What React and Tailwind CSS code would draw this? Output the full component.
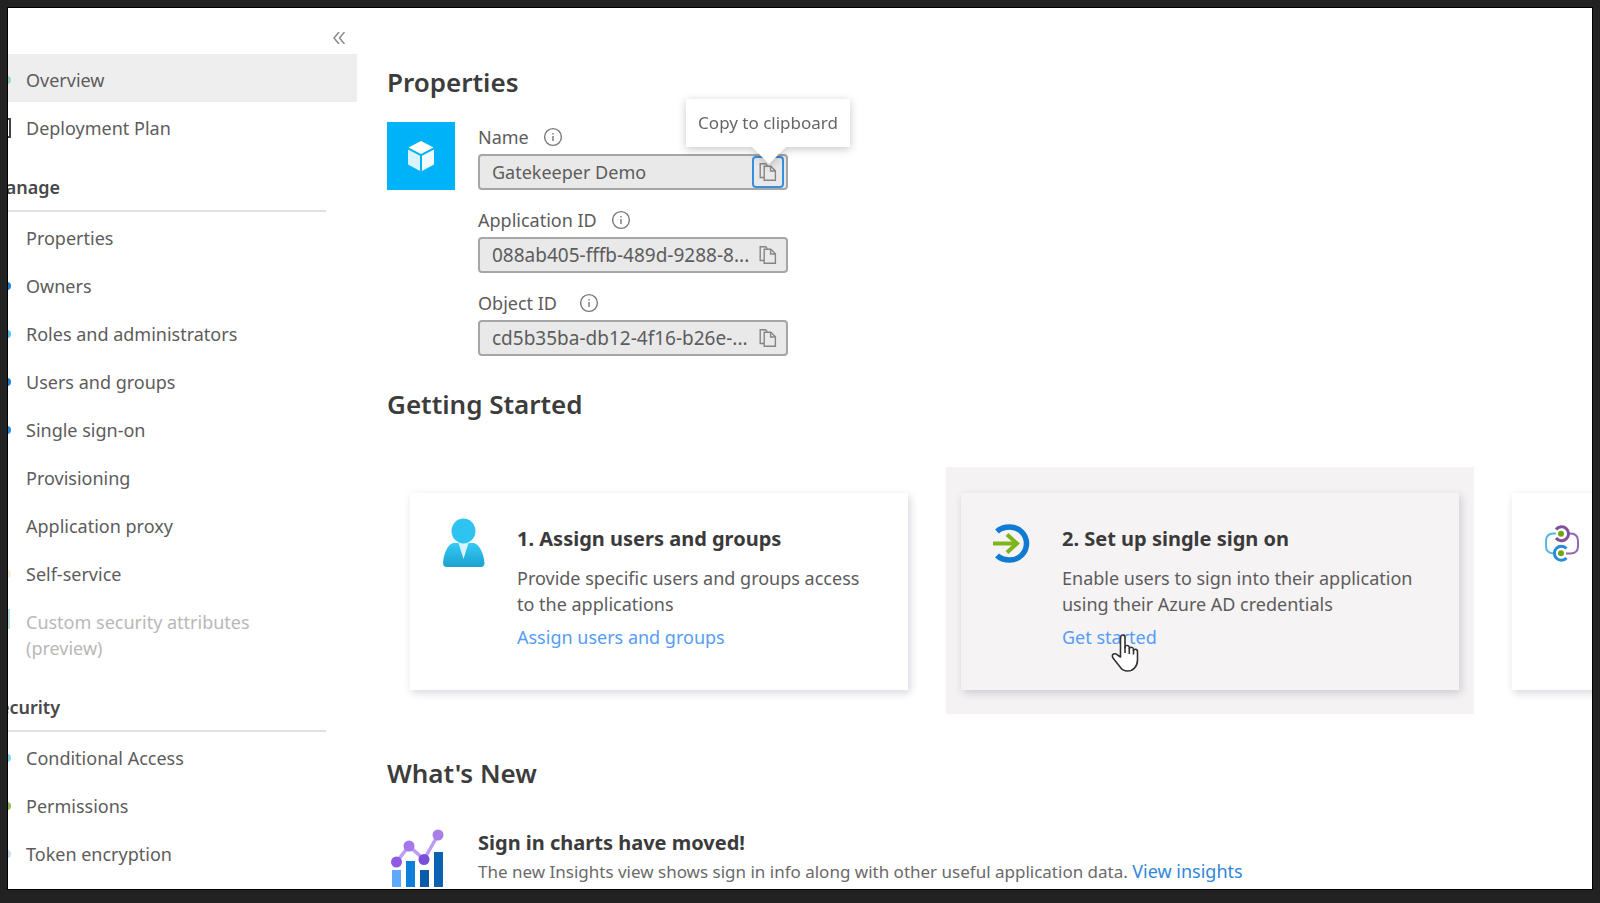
import React from 'react';

const manageItems = [
  { label: 'Properties' },
  { label: 'Owners', tint: 'bg-[#1b7fd0]' },
  { label: 'Roles and administrators', tint: 'bg-[#4fc3ea]' },
  { label: 'Users and groups', tint: 'bg-[#1b7fd0]' },
  { label: 'Single sign-on', tint: 'bg-[#2b8be0]' },
  { label: 'Provisioning' },
  { label: 'Application proxy' },
  { label: 'Self-service', tint: 'bg-[#fbeecb]' },
];

const securityItems = [
  { label: 'Conditional Access', tint: 'bg-[#7fd6ee]' },
  { label: 'Permissions', tint: 'bg-[#8cc152]' },
  { label: 'Token encryption', tint: 'bg-[#c9dcea]' },
];

const NavItem = ({ label, tint, active, outlined }) => (
  <a href="#" className={`flex h-12 items-center gap-[15px] pt-1 text-lg text-[#5c5c5c] ${active ? 'bg-[#efeeee]' : ''}`}>
    <span className="flex w-[27px] items-center justify-end">
      {outlined ? (
        <span className="h-5 w-6 border-2 border-[#444] bg-white" />
      ) : (
        <span className={`h-2 w-2 rounded-full ${tint || ''}`} />
      )}
    </span>
    {label}
  </a>
);

const NavHeading = ({ children }) => (
  <h3 className="mr-[31px] flex h-[62px] items-center border-b-2 border-[#e1e1e1] pt-3.5 pl-[5px] text-lg font-semibold text-[#484848]">
    {children}
  </h3>
);

const InfoIcon = () => (
  <svg className="h-5 w-5" viewBox="0 0 20 20" fill="none" stroke="#777" strokeWidth="1.4">
    <circle cx="10" cy="10" r="8.4" />
    <path d="M10 9v5M10 6v1.4" />
  </svg>
);

const CopyIcon = () => (
  <svg className="h-5 w-5" viewBox="0 0 20 20" fill="none" stroke="#858585" strokeWidth="1.4">
    <path d="M6 15.5H2.2V1.8h5.3l2 2" />
    <path d="M6.2 4.2h6.6l4.6 4.6v9.4H6.2z" />
    <path d="M12.6 4.4v4.6h4.6" />
  </svg>
);

const Field = ({ id, label, value, focused, wideGap }) => (
  <div>
    <div className={`flex h-[34px] items-center text-lg text-[#5c5c5c] ${wideGap ? 'gap-[22px]' : 'gap-3.5'}`}>
      <label htmlFor={id}>{label}</label>
      <InfoIcon />
    </div>
    <div className="relative flex h-9 items-center rounded-sm border-2 border-[#a6a6a6] bg-[#e9e9e9] pr-0.5">
      <input
        id={id}
        readOnly
        value={value}
        className={`h-full min-w-0 flex-1 bg-transparent pl-3 text-[#5c5c5c] outline-none ${focused ? 'text-lg' : 'text-[19px]'}`}
      />
      <button
        type="button"
        aria-label={`Copy ${label}`}
        className={`flex h-8 w-8 shrink-0 items-center justify-center rounded-sm ${focused ? 'border-2 border-[#3b8ede]' : ''}`}
      >
        <CopyIcon />
      </button>
      {focused && (
        <div role="tooltip" className="absolute right-[-64px] bottom-[41px] flex h-12 items-center bg-white px-3 text-[17px] whitespace-nowrap text-[#666] drop-shadow-[0_2px_4px_rgba(0,0,0,0.22)]">
          Copy to clipboard
          <svg className="absolute top-full right-[64px] h-[17px] w-[34px]" viewBox="0 0 34 17" fill="#fff">
            <path d="M0 0h34L17 17z" />
          </svg>
        </div>
      )}
    </div>
  </div>
);

const UserIcon = () => (
  <svg className="h-[50px] w-[43px]" viewBox="0 0 43 50">
    <defs>
      <linearGradient id="userBody" x1="0" y1="0" x2="0" y2="1">
        <stop offset="0" stopColor="#35cbf5" />
        <stop offset="1" stopColor="#1ba0d0" />
      </linearGradient>
    </defs>
    <path d="M11 25h21c6 2 10 12 10.500 20q0 4-4 4H5q-4 0-4-4C1.500 37 5 27 11 25z" fill="url(#userBody)" />
    <path d="M16.500 25h10l-5 16z" fill="#d8f3fc" />
    <ellipse cx="21.500" cy="13" rx="12" ry="12.500" fill="#2ec3f1" />
  </svg>
);

const SignOnIcon = () => (
  <svg className="h-[39px] w-[37px]" viewBox="0 0 37 39" fill="none">
    <path d="M4 7.500C8 3.500 13 3 17 3a16.500 16.500 0 0 1 0 33c-4 0-9-.5-13-4.500" stroke="#0f7bd3" strokeWidth="5.500" />
    <path d="M0 19.500h24" stroke="#7fb51c" strokeWidth="4" />
    <path d="M14 10.500l10 9-10 9" stroke="#7fb51c" strokeWidth="4" />
  </svg>
);

const ProvisionIcon = () => (
  <svg className="h-[37px] w-9" viewBox="0 0 36 37" fill="none">
    <path d="M12 8.500H9.500Q2 8.500 2 16v5q0 7 7.500 7.500" stroke="#55b7e6" strokeWidth="2" />
    <path d="M24 8.500h2.500Q34 8.500 34 16v5q0 7.500-7.500 7.500H22" stroke="#9469ae" strokeWidth="2" />
    <path d="M12 4.500A7 7 0 1 1 12 13" stroke="#7f519c" strokeWidth="3" />
    <path d="M22.500 23.500A7 7 0 1 0 22.500 33" stroke="#2a8cd6" strokeWidth="3" />
    <circle cx="17" cy="8.700" r="3" fill="#6ea514" />
    <circle cx="17" cy="28.300" r="3" fill="#6ea514" />
  </svg>
);

const ChartIcon = () => (
  <svg className="mt-0.5 h-[58px] w-[53px] shrink-0" viewBox="0 0 53 58">
    <path d="M1 41h9v17H1z" fill="#5ea9fb" />
    <path d="M15 32h9v26h-9z" fill="#0f7fdc" />
    <path d="M29 41h9v17h-9z" fill="#0b5ca8" />
    <path d="M43 23h9v35h-9z" fill="#0b62b0" />
    <path d="M5.500 33L18 17l15 13.500L47 6" fill="none" stroke="#bd9cf3" strokeWidth="3.500" />
    <circle cx="5.500" cy="33" r="5.500" fill="#8f5be4" />
    <circle cx="18" cy="17" r="5.500" fill="#a577ee" />
    <circle cx="33" cy="30.500" r="5.500" fill="#7a4fdc" />
    <circle cx="47" cy="6" r="5.500" fill="#a680e6" />
  </svg>
);

const HandCursor = () => (
  <svg className="absolute top-3 left-[49px] h-[38px] w-7" viewBox="0 0 28 38" fill="#fff" stroke="#333" strokeWidth="1.600" strokeLinejoin="round">
    <path d="M9.500 23V4q0-3 2.300-3T14 4v9.500q0-2 2-2t2.300 2v1.200q.2-1.500 2-1.500t2.200 2v1.300q.3-1.300 1.800-1.300 2.200 0 2.200 2.500V26q0 5-3 8-2.500 3-7 3-4.500 0-7-3.500L2 24q-1.500-3 .5-4 2-.8 4 1z" />
    <path d="M14 13v6M18.300 14.500V20M22.500 16v4.500" fill="none" />
  </svg>
);

const StepCard = ({ icon, title, text, link, hovered }) => (
  <div className={`w-[528px] shrink-0 px-[15px] pt-[26px] pb-6 ${hovered ? 'bg-[#f4f2f3]' : ''}`}>
    <div className={`flex h-[197px] gap-8 px-8 pt-[25px] shadow-[2px_3px_8px_rgba(60,50,90,0.2)] ${hovered ? 'bg-[#f5f3f4]' : 'bg-white'}`}>
      <div className="flex h-[50px] shrink-0 items-center">{icon}</div>
      {title && (
        <div className="pt-[5px]">
          <h3 className="text-xl leading-8 font-bold text-[#3a3a3a]">{title}</h3>
          <p className="mt-2.5 w-[362px] text-lg leading-[26px] text-[#5c5c5c]">{text}</p>
          <a href="#" className="relative mt-[5px] inline-block text-lg leading-[30px] text-[#559df5]">
            {link}
            {hovered && <HandCursor />}
          </a>
        </div>
      )}
    </div>
  </div>
);

const App = () => {
  return (
    <div className="h-screen bg-[#222] px-2 pt-2 pb-[14px] font-['Noto_Sans','Open_Sans',sans-serif]">
      <div className="flex h-full overflow-hidden bg-white ring-1 ring-black">

        {/* Side navigation, scrolled slightly out on the left */}
        <nav className="-ml-6 w-[373px] shrink-0">
          <div className="flex h-[46px] items-center justify-end pt-3.5 pr-3">
            <button type="button" aria-label="Collapse menu">
              <svg className="h-3 w-3" viewBox="0 0 12 12" fill="none" stroke="#8a8a8a" strokeWidth="1.5">
                <path d="M6 0L1 6l5 6M11.500 0l-5 6 5 6" />
              </svg>
            </button>
          </div>
          <NavItem label="Overview" tint="bg-[#8fdcb4]" active />
          <NavItem label="Deployment Plan" outlined />
          <NavHeading>Manage</NavHeading>
          {manageItems.map(item => (
            <NavItem key={item.label} {...item} />
          ))}
          <div className="flex h-[74px] gap-4 pt-[13px] text-lg leading-[26px] text-[#b8b8b8]">
            <span className="flex w-[26px] justify-end">
              <span className="h-5 w-[2px] bg-[#b9dce2]" />
            </span>
            <span className="w-[260px]">Custom security attributes (preview)</span>
          </div>
          <NavHeading>Security</NavHeading>
          {securityItems.map(item => (
            <NavItem key={item.label} {...item} />
          ))}
        </nav>

        <main className="min-w-0 flex-1 overflow-hidden pl-[30px]">
          <h2 className="pt-14 text-[26px] leading-9 font-semibold text-[#3c3c3c]">Properties</h2>

          <div className="mt-[22px] flex gap-[23px]">
            <div className="flex h-[68px] w-[68px] items-center justify-center bg-[#00b3f8]">
              <svg className="h-8 w-7" viewBox="0 0 28 32">
                <path d="M14 1l12.500 6.500L14 14 1.500 7.500z" fill="#fff" />
                <path d="M1 9.500l12 6.200V31L1 24.500z" fill="#d9f3fe" />
                <path d="M27 9.500l-12 6.200V31l12-6.500z" fill="#f0faff" />
              </svg>
            </div>
            <div className="-mt-0.5 flex w-[310px] flex-col gap-[13px]">
              <Field id="app-name" label="Name" value="Gatekeeper Demo" focused />
              <Field id="app-id" label="Application ID" value="088ab405-fffb-489d-9288-8..." />
              <Field id="object-id" label="Object ID" value="cd5b35ba-db12-4f16-b26e-..." wideGap />
            </div>
          </div>

          <h2 className="mt-[30px] text-[26px] leading-9 font-semibold text-[#3c3c3c]">Getting Started</h2>

          <div className="mt-[45px] ml-2 flex gap-[23px]">
            <StepCard
              icon={<UserIcon />}
              title="1. Assign users and groups"
              text="Provide specific users and groups access to the applications"
              link="Assign users and groups"
            />
            <StepCard
              icon={<SignOnIcon />}
              title="2. Set up single sign on"
              text="Enable users to sign into their application using their Azure AD credentials"
              link="Get started"
              hovered
            />
            <StepCard icon={<ProvisionIcon />} />
          </div>

          <h2 className="mt-[41px] text-[26px] leading-9 font-semibold text-[#3c3c3c]">What's New</h2>

          <div className="mt-9 flex gap-[34px] pl-1">
            <ChartIcon />
            <div>
              <h3 className="text-xl leading-8 font-bold text-[#3c3c3c]">Sign in charts have moved!</h3>
              <p className="text-[17px] leading-6 whitespace-nowrap text-[#6a6a6a]">
                The new Insights view shows sign in info along with other useful application data.{' '}
                <a href="#" className="text-lg leading-6 text-[#2f87d8]">View insights</a>
              </p>
            </div>
          </div>
        </main>

      </div>
    </div>
  );
};

export default App;
